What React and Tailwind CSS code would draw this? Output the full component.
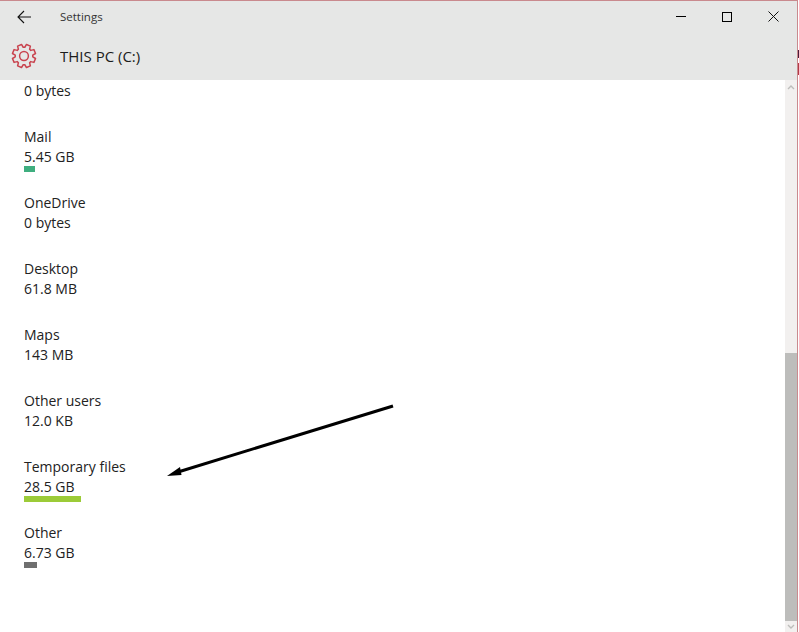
import React from "react";

const ITEMS = [
  { label: "Mail", value: "5.45 GB", bar: "w-[11px] bg-[#3fae7f]" },
  { label: "OneDrive", value: "0 bytes" },
  { label: "Desktop", value: "61.8 MB" },
  { label: "Maps", value: "143 MB" },
  { label: "Other users", value: "12.0 KB" },
  { label: "Temporary files", value: "28.5 GB", bar: "w-[57px] bg-[#9ccb38]" },
  { label: "Other", value: "6.73 GB", bar: "w-[13px] bg-[#6f6f6f]" },
];

// 8 tooth gear outline around 0,0
function gearPath() {
  const pts = [];
  for (let i = 0; i < 8; i++) {
    const a = (i * Math.PI) / 4 + Math.PI / 8;
    [[-0.3, 8.8], [-0.18, 11.8], [0.18, 11.8], [0.3, 8.8]].forEach(([da, r]) => {
      pts.push(`${(r * Math.cos(a + da)).toFixed(2)} ${(r * Math.sin(a + da)).toFixed(2)}`);
    });
  }
  return "M" + pts.join("L") + "Z";
}

function Gear() {
  return (
    <svg width="26" height="26" viewBox="-13 -13 26 26" fill="none" stroke="#c9444f" strokeWidth="1.5" strokeLinejoin="round">
      <path d={gearPath()} />
      <circle r="4.4" />
    </svg>
  );
}

function StorageItem({ label, value, bar }) {
  return (
    <div className="h-[66px]">
      <div className="h-5 leading-5">{label}</div>
      <div className="h-5 leading-5">{value}</div>
      {bar && <div className={`h-[6px] -mt-px ${bar}`} />}
    </div>
  );
}

export default function App() {
  return (
    <div className="relative w-[799px] h-[632px] overflow-hidden bg-white font-['Open_Sans','Noto_Sans',sans-serif] text-[#222]">
      <div className="flex flex-col h-full w-[798px] border-t border-r border-[#c98a8e]">
        {/* TITLE BAR */}
        <div className="bg-[#e6e7e6] h-[79px] shrink-0">
          <div className="flex items-center h-[31px]">
            <svg className="ml-[17px]" width="14" height="14" viewBox="0 0 14 14" fill="none" stroke="#111" strokeWidth="1.1">
              <path d="M14 7H1.2M7 1 1 7l6 6" />
            </svg>
            <span className="ml-[29px] text-[11.500px] text-[#333]">Settings</span>
            <div className="ml-auto flex items-center">
              <div className="w-[10px] h-px bg-black mr-[36px]" />
              <div className="w-[10px] h-[10px] border border-black mr-[36px]" />
              <svg className="mr-[18px]" width="11" height="11" viewBox="0 0 11 11" stroke="#111" strokeWidth="1">
                <path d="M.5.5l10 10M10.5.5l-10 10" />
              </svg>
            </div>
          </div>
          <div className="flex items-center h-[48px]">
            <div className="ml-[11px] w-[26px]">
              <Gear />
            </div>
            <span className="ml-[23px] text-[15px] font-medium text-[#1c1c1c]">THIS PC (C:)</span>
          </div>
        </div>

        {/* CONTENT */}
        <div className="flex flex-1 min-h-0">
          <div className="flex-1 pl-6 pt-px text-[14px] leading-5 overflow-hidden">
            <div className="h-[46px] leading-5">0 bytes</div>
            {ITEMS.map((item) => (
              <StorageItem key={item.label} {...item} />
            ))}
          </div>

          {/* SCROLLBAR */}
          <div className="w-3 bg-[#f2f0ef] flex flex-col items-center">
            <svg className="mt-[4px]" width="8" height="6" viewBox="0 0 8 6" fill="none" stroke="#bdbdbb" strokeWidth="1.4">
              <path d="M1 5l3-3 3 3" />
            </svg>
            <div className="mt-[263px] w-full h-[268px] bg-[#bdbdbb]" />
            <svg className="mt-[3px]" width="8" height="6" viewBox="0 0 8 6" fill="none" stroke="#bdbdbb" strokeWidth="1.4">
              <path d="M1 1l3 3 3-3" />
            </svg>
          </div>
        </div>
      </div>

      {/* DESKTOP SHOWING BEHIND THE WINDOW EDGE */}
      <div className="absolute right-0 top-[50px] w-px h-[8px] bg-[#4a1c3a]" />
      <div className="absolute right-0 top-[63px] w-px h-[12px] bg-[#b23a48]" />

      {/* ANNOTATION ARROW */}
      <svg className="absolute left-0 top-0 pointer-events-none" width="799" height="632" fill="#000">
        <path d="M393 406 178 472" stroke="#000" strokeWidth="3" />
        <path d="M167 476l13-9 1.500 8z" />
      </svg>
    </div>
  );
}
